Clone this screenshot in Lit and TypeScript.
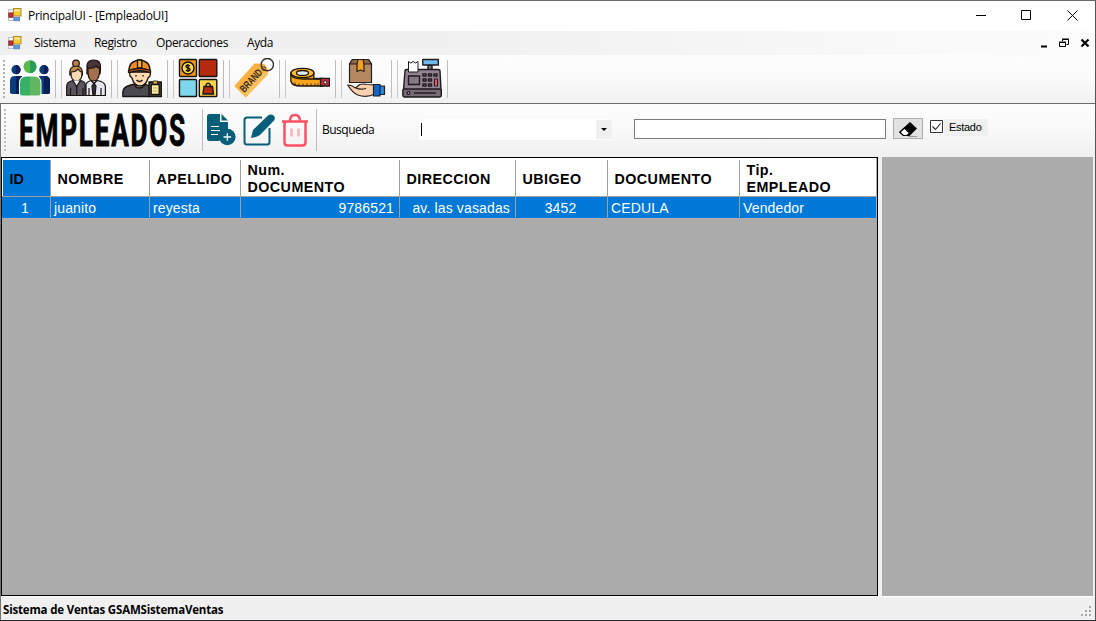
import { LitElement, html, css, svg } from "lit";
import { customElement } from "lit/decorators.js";

const people = svg`
  <g fill="#0a3a7c"><circle cx="6" cy="11.7" r="4.6"/><path d="M0 35V23q0-5 5-5h6v18H2z"/>
  <circle cx="33.9" cy="11.7" r="4.6"/><path d="M40 35V23q0-5-5-5h-6v18h9z"/></g>
  <g fill="#071f55"><path d="M6 7.1a4.6 4.6 0 0 1 0 9.200zM33.900 7.1a4.600 4.600 0 0 1 0 9.200zM6 18h6v18H6zM34 18h1q5 0 5 5v11q0 2-2 2h-4z"/></g>
  <path d="M9 37V25q0-7.500 7.500-7.500h7.500q7.500 0 7.500 7.500v12z" fill="#fdfdfd"/>
  <circle cx="20" cy="8.700" r="6.500" fill="#5cba4c"/><path d="M20 2.200a6.500 6.500 0 0 1 0 13z" fill="#299b5a"/>
  <path d="M10 35V25q0-6.500 6.500-6.500H20V37.500h-8q-2 0-2-2z" fill="#38b166"/><path d="M20 18.500h4q6.500 0 6.500 6.500v10q0 2.500-2 2.500H20z" fill="#60b75f"/>`;

const staff = svg`<g stroke="#17120f" stroke-width="1.200" stroke-linejoin="round">
  <circle cx="10" cy="5.500" r="3.300" fill="#b98145"/>
  <path d="M3.800 17Q3 8 10 8t6.500 9z" fill="#c08a4c"/><path d="M5 14q5 0 7-3 2 3 4 3 .5 9-5.500 9T5 14z" fill="#f8d9b5"/>
  <path d="M.7 37.500V28q0-4 6-5.500l4 4 4-4q4.500 1 4.500 4v11z" fill="#57545d"/><path d="M7 22.500l3.700 6 3.600-6" fill="#fff"/><path d="M10.700 28v9M4.500 30v7M17 30v7" fill="none"/>
  <path d="M21 16V7q1-5 7-5 7 0 6.500 8l-.5 6z" fill="#49343a"/><path d="M22 10q6 1 8-2 2 2 3.500 2v5q-1 8-6 8t-5.500-8z" fill="#a56f4e"/>
  <path d="M20 37.500V27q0-3 5-4.500l3 3 3-3q8 1 8.400 6v9z" fill="#e6e7ef"/><path d="M28 25l2 3-1 9.500h-2L26 28z" fill="#30303a"/><path d="M23 30v7M35 30v7" fill="none"/></g>`;

const worker = svg`<g stroke="#15110f" stroke-width="1.300" stroke-linejoin="round">
  <path d="M.8 38.500V34q0-5 8-7l4-1h10l5 2v10.500z" fill="#4b4a50"/><path d="M13 24v4q4 4 9 0v-4" fill="#f3c89f"/>
  <path d="M9 14q-2 0-1 4l2 2q2 8 8 8t8-8l2-2q1-4-1-4z" fill="#ffdab3"/>
  <path d="M7 13.500Q6.500 3 17.500 2 28.500 3 28 13.500q-10-3-21 0z" fill="#f18c21"/><path d="M15.500 2h4.300v8h-4.300z" fill="#ffaf3b"/><path d="M6.500 12.500q11-4 22 0v2q-11-3.500-22 0z" fill="#e9761a"/>
  <path d="M14 17v1.500M21 17v1.500M14.500 22q3 3 6 0" fill="none"/>
  <path d="M27 24h12.300v14.700H27z" fill="#4b4435"/><path d="M29.200 26.500h8v10h-8z" fill="#fff0a6"/><path d="M31 23h4.500v3H31z" fill="#d8b93b" stroke-width=".8"/></g><path d="M31 30h4.500M31 33h4.500" stroke="#c4a953"/>`;

const tiles = svg`<g stroke="#161313" stroke-width="1.400"><rect x="1.500" y="1.500" width="17" height="17" rx=".8" fill="#f3931c"/>
  <rect x="21.300" y="1.500" width="17.500" height="17" rx=".8" fill="#b52a0c"/><rect x="1.500" y="21.500" width="17" height="17" rx=".8" fill="#7fd7ef"/>
  <rect x="21.300" y="21.500" width="17.500" height="17" rx=".8" fill="#ffd34b"/><circle cx="10" cy="10" r="6" fill="#ffd64d"/>
  <path d="M12 7.800q-4-1.500-4 .7c0 2 4 1 4 3 0 2-2.500 1.700-4 .7M10 6v8" fill="none"/>
  <path d="M26 28.500h8.500l1 7.500H25z" fill="#b52a0c"/><path d="M28 29v-2q2-3.500 4.400 0v2" fill="none"/></g>`;

const brand = svg`<path d="M20.500 5.500l9.500.3 4 5.500-.5 5.500L11.700 39.500.3 28z" fill="#fbb03f"/><path d="M34 11.500l-.5 5.500-21.800 22.500L6 34z" fill="#ffc05d"/>
  <circle cx="33.300" cy="6.600" r="6.200" fill="none" stroke="#3a3637" stroke-width="1.500"/><circle cx="29.700" cy="10.500" r="1.800" fill="none" stroke="#3a3637"/>
  <text class="tag" transform="translate(10.300 35) rotate(-47)" textLength="27.500" lengthAdjust="spacingAndGlyphs">BRAND</text>`;

const tape = svg`<g stroke="#21170c" stroke-width="1.300" stroke-linejoin="round">
  <path d="M.8 15v8q1 5 10 5h22v-7.500h-9V15z" fill="#f6a51c"/><ellipse cx="12.500" cy="15" rx="11.500" ry="4.700" fill="#ffbd2e"/>
  <ellipse cx="12.500" cy="15" rx="6" ry="2.500" fill="#e2edf4"/><path d="M1 17q2 4 12 4h18" fill="none"/><path d="M5 27v-2.500M9 28v-2.500M13 28v-2.500M17 28v-2.500M21 28v-2.500M25 28v-2.500M28 28v-2.500" fill="none" stroke-width=".8"/>
  <path d="M30.500 20.300h9V28h-9z" fill="#b62f45"/><circle cx="35.200" cy="24.200" r="1.500" fill="#eee" stroke-width=".8"/></g>`;

const delivery = svg`<g stroke="#24201e" stroke-width="1.200" stroke-linejoin="round"><path d="M3.500 6l3-4.500h16l3 4.500v18.500h-22z" fill="#b68862"/>
  <path d="M3.500 6l3-4.500h16l3 4.500z" fill="#8f6849"/><path d="M12 1.500h5l1 5v7l-3.500-1.500-3.500 1.500v-7z" fill="#f5a01e"/>
  <path d="M1.700 27q4 0 8 3l4-3.500q4-1 7 0l8 .5v9q-8 4-17 1-5-2-10-10z" fill="#ffd0ad"/><path d="M10 30q4 2 10 .5" fill="none"/>
  <rect x="33" y="28" width="5.500" height="8.500" fill="#2488e6"/><rect x="27.500" y="26.500" width="6.500" height="11.500" fill="#1265cd"/></g>`;

const register = svg`<g stroke="#1e1a1e" stroke-width="1.400" stroke-linejoin="round"><path d="M26 7h4v6h-4z" fill="#777"/><rect x="20.800" y="1.500" width="15.500" height="5.500" fill="#70bbea"/>
  <path d="M3 13q0-1.500 2-1.500h31q2 0 2 1.500l1 19H1.500z" fill="#91838f"/><path d="M6.500 14V3.500l2.300 1.500 2.300-1.500L13.500 5l2.500-1.500V14z" fill="#fff" stroke-width="1"/>
  <rect x=".8" y="31" width="38.500" height="8" rx="2" fill="#776b77"/><rect x="6.500" y="18" width="11" height="8.500" fill="#877a86"/>
  <g fill="#c6b9c1"><path d="M21 16h3v2h-3zM26.500 16h3v2h-3zM32 16h3v2h-3zM21 21h3v2h-3zM26.500 21h3v2h-3zM21 26h3v2h-3zM26.500 26h3v2h-3z"/></g>
  <path d="M32.500 21h3v7h-3z" fill="#ff526a" stroke-width="1"/><circle cx="6.500" cy="35" r="1.400" fill="#ddd"/><path d="M12 35h22" /></g>`;

const tools: [string, unknown][] = [
  ["Clientes", people], ["Usuarios", staff], ["Empleados", worker], ["Categorias", tiles],
  ["Marcas", brand], ["Medidas", tape], ["Proveedores", delivery], ["Ventas", register],
];

const appIcon = html`<svg class="app-icon" width="14" height="14" viewBox="0 0 14 14">
  <path d="M.5 1.500h5v11h-5z" fill="#f3f5fa" stroke="#b7bdc9"/>
  <rect x="5.500" y=".5" width="7.500" height="7.500" fill="#f6cc3b" stroke="#b38a28"/><path d="M6.500 1.500h5.500v2H6.500z" fill="#ffeb96"/>
  <rect x=".9" y="5" width="3.800" height="4.200" fill="#cb3434" stroke="#8e2028"/><rect x="6" y="9.300" width="5.500" height="3.400" fill="#6499e1" stroke="#5c86c0"/></svg>`;

interface Column { title: string; cls: string; value: string; }
const columns: Column[] = [
  { title: "ID", cls: "center selected", value: "1" },
  { title: "NOMBRE", cls: "", value: "juanito" },
  { title: "APELLIDO", cls: "", value: "reyesta" },
  { title: "Num. DOCUMENTO", cls: "right", value: "9786521" },
  { title: "DIRECCION", cls: "right", value: "av. las vasadas" },
  { title: "UBIGEO", cls: "center", value: "3452" },
  { title: "DOCUMENTO", cls: "", value: "CEDULA" },
  { title: "Tip. EMPLEADO", cls: "", value: "Vendedor" },
];

@customElement("app-root")
export class AppRoot extends LitElement {
  static styles = css`
    :host { display: block; width: 1096px; height: 621px; overflow: hidden; color: #000; }
    * { box-sizing: border-box; }
    svg { display: block; flex: none; }
    .window { height: 621px; display: flex; flex-direction: column; background: #f0f0f0; border-top: 1px solid #6b686b; border-bottom: 1px solid #29272f; border-right: 1px solid #55535c; font: 12px "Open Sans", sans-serif; }
    .title { height: 30px; flex: none; display: flex; align-items: center; background: #fff; padding: 0 0 2px 8px; }
    .title-text { margin-left: 6px; letter-spacing: -.26px; flex: 1; white-space: nowrap; }
    .caption { display: flex; gap: 35px; margin-right: 17px; }
    .menu { height: 24px; flex: none; display: flex; align-items: center; padding: 0 0 1px 8px; background: linear-gradient(90deg, #f0f0f0 40%, #fcfcfc); }
    .menu-items { flex: 1; display: grid; grid-template-columns: 60px 62px 91px 60px; padding-left: 12px; letter-spacing: -.38px; }
    .mdi { margin-right: 5px; }
    .tools { height: 48px; flex: none; display: flex; background: linear-gradient(#fdfdfd, #fbfbfb 45%, #f1f1f1); border-radius: 3px; padding-top: 3px; }
    .tool { width: 56px; height: 42px; display: flex; align-items: flex-start; }
    .tool::before { content: ""; width: 1px; height: 38px; margin: 2px 4px 0 5px; background: #c5c5c5; }
    .tool::after { content: ""; width: 1px; height: 38px; margin: 2px 0 0 5px; background: #bdbdbd; }
    .tool:first-child::before { width: 2px; margin: 2px 5px 0 3px; background: repeating-linear-gradient(#b0b0b0 0 2px, transparent 2px 4px); }
    .tag { font: bold 10.500px "Liberation Sans", sans-serif; fill: #35302a; }
    .child { flex: 1; min-height: 0; display: flex; flex-direction: column; border-top: 1px solid #696969; border-left: 1px solid #737373; }
    .bar { height: 53px; flex: none; display: flex; align-items: flex-start; background: linear-gradient(#fdfdfd, #f8f8f8 50%, #f0f0f0); padding-top: 5px; }
    .grip { width: 2px; height: 42px; margin-left: 3px; background: repeating-linear-gradient(#bdbdbd 0 2px, transparent 2px 4px); }
    .heading { margin: -5px 0 0 12px; overflow: visible; }
    .heading-text { font: bold 44px Roboto, sans-serif; letter-spacing: 3px; stroke: #000; stroke-width: .9px; }
    .sep { width: 1px; height: 42px; background: #bdbdbd; }
    .doc { margin: 4px 7px 0 3px; }
    .edit { margin-top: 4px; }
    .trash { margin: 4px 7px 0 6px; }
    .label { margin: 12px 0 0 5px; width: 97px; letter-spacing: -.5px; line-height: 18px; }
    .combo { width: 193px; height: 21px; margin-top: 10px; background: #fff; display: flex; justify-content: space-between; align-items: center; padding: 0 0 0 2px; }
    .caret { width: 1px; height: 13px; background: #000; margin-bottom: 1px; }
    .drop { width: 16px; height: 19px; background: #f0f0f0; display: grid; place-items: center; }
    .field { width: 252px; height: 20px; margin: 10px 0 0 22px; background: #fff; border: 1px solid #7a7a7a; }
    .eraser { width: 30px; height: 21px; margin: 9px 0 0 7px; background: #e1e1e1; border: 1px solid #adadad; display: grid; place-items: center; }
    .check { height: 17px; margin: 10px 0 0 7px; width: 58px; display: flex; align-items: center; gap: 6px; background: linear-gradient(90deg, #f8f8f8 14px, #f0f0f0 14px); font: 11px "Liberation Sans", sans-serif; letter-spacing: -.3px; padding-bottom: 2px; }
    .content { height: 439px; flex: none; display: flex; }
    .grid { width: 877px; background: #ababab; border: 1px solid #000; flex: none; padding-right: 1px; }
    .row { display: grid; grid-template-columns: 49px 99px 91px 159px 116px 92px 132px 136px; }
    .head { height: 39px; background: #fff; border-bottom: 1px solid #a0a0a0; padding-top: 2px; }
    .th { border-right: 1px solid #a0a0a0; display: flex; align-items: center; padding: 2px 18px 0 6.500px; font: bold 14.300px/17px "Liberation Sans", sans-serif; letter-spacing: .45px; }
    .th:last-child, .td:last-child { border-right: 0; }
    .th.selected { background: #0078d7; margin-left: 1px; letter-spacing: 0; }
    .data { height: 22px; background: #0078d7; border-bottom: 1px solid #b0b0b0; color: #fff; }
    .td { border-right: 1px solid #a0a0a0; font: 14px/23px "Liberation Sans", sans-serif; letter-spacing: .14px; padding: 0 5px 0 3px; white-space: nowrap; }
    .center { text-align: center; }
    .td.center { padding-right: 5px; }
    .right { text-align: right; }
    .side { width: 211px; margin-left: 4px; background: #ababab; }
    .status { height: 24px; flex: none; display: flex; justify-content: space-between; align-items: center; border-top: 1px solid #fff; padding: 2px 3px 0 2px; font-weight: 700; font-size: 11.500px; letter-spacing: -.18px; }
    .size-grip { margin-top: 3px; }
  `;

  render() {
    return html`<div class="window">
      <div class="title">${appIcon}<span class="title-text">PrincipalUI - [EmpleadoUI]</span>
        <div class="caption">
          <svg width="11" height="11"><path d="M1 5.500h10" stroke="#000"/></svg>
          <svg width="11" height="11"><path d="M.5.5h9v9h-9z" fill="none" stroke="#000"/></svg>
          <svg width="11" height="11"><path d="M.5.500l10 10M10.500.500l-10 10" stroke="#000"/></svg>
        </div>
      </div>
      <div class="menu">${appIcon}
        <div class="menu-items"><span>Sistema</span><span>Registro</span><span>Operacciones</span><span>Ayda</span></div>
        <svg class="mdi" width="50" height="10" fill="none" stroke="#000">
          <path d="M1 8.500h6" stroke-width="2"/><path d="M22.500 3V1.500h6v5h-2M19.500 4.500h6v4h-6zM22 1h7M19 4h7"/><path d="M41.500 1.500l7 7M48.500 1.500l-7 7" stroke-width="2.200"/>
        </svg>
      </div>
      <div class="tools">${tools.map(([name, art]) => html`<div class="tool"><svg role="img" aria-label=${name} width="40" height="40" viewBox="0 0 40 40">${art}</svg></div>`)}</div>
      <div class="child">
        <div class="bar">
          <div class="grip"></div>
          <svg class="heading" width="184" height="53"><text class="heading-text" x="1" y="42" textLength="168" lengthAdjust="spacingAndGlyphs">EMPLEADOS</text></svg>
          <div class="sep"></div>
          <svg class="doc" width="30" height="34" fill="#075e78">
            <path d="M3.500 1H14v8h8v9q-8 1-8.500 10H3.500Q1 28 1 25.500v-22Q1 1 3.500 1zM15.500 1L22 7.500h-6.500z"/>
            <path d="M5 13.500h8M5 17.500h9M5 21.500h7" stroke="#fff" stroke-width="1.200"/><circle cx="21.300" cy="24" r="8.300"/><path d="M17.500 24h7.600M21.300 20.200v7.600" stroke="#fff" stroke-width="1.300"/>
          </svg>
          <svg class="edit" width="32" height="34"><path d="M19 4.500H4q-2.500 0-2.500 2.500v22Q1.500 31.500 4 31.500h20q2.500 0 2.500-2.500V15" fill="none" stroke="#075e78" stroke-width="2"/>
            <path d="M8 25l2-8L25 2.500Q28 .5 30.500 2.500t.5 5L17 22q-3 2-9 3z" fill="#075e78"/></svg>
          <svg class="trash" width="28" height="34" fill="none" stroke="#fb5165"><path d="M1 8.500h26M3.500 9v20.500q0 3 3 3h15q3 0 3-3V9" stroke-width="2.500"/><path d="M9 8q0-6 5-6t5 6" stroke-width="2.300"/><path d="M10.500 15.500v8M17.500 15.500v8" stroke="#ffb3bd" stroke-width="2.600"/></svg>
          <div class="sep"></div>
          <span class="label">Busqueda</span>
          <div class="combo"><i class="caret"></i><span class="drop"><svg width="6" height="3"><path d="M0 0h6L3 3z"/></svg></span></div>
          <div class="field"></div>
          <div class="eraser"><svg width="20" height="16"><path d="M12 1l7 6.500-7.500 7.500H5L1 11z"/><path d="M6.500 7l5 5-2.500 2.500H5.500L2 11.200z" fill="#fff" stroke="#000" stroke-width="1.200"/><path d="M10 15.500h9" stroke="#999"/></svg></div>
          <label class="check"><svg width="13" height="13"><path d="M.5.5h12v12H.5z" fill="#fff" stroke="#333"/><path d="M2.500 6.500l3 3 5-6" fill="none" stroke="#222" stroke-width="1.100"/></svg>Estado</label>
        </div>
        <div class="content">
          <div class="grid">
            <div class="row head">${columns.map((c) => html`<div class="th ${c.cls.includes("selected") ? "selected" : ""}">${c.title}</div>`)}</div>
            <div class="row data">${columns.map((c) => html`<div class="td ${c.cls}">${c.value}</div>`)}</div>
          </div>
          <div class="side"></div>
        </div>
        <div class="status"><span>Sistema de Ventas GSAMSistemaVentas</span>
          <svg class="size-grip" width="11" height="11" fill="#a8a8a8"><path d="M8 0h2v2H8zM4 4h2v2H4zM8 4h2v2H8zM0 8h2v2H0zM4 8h2v2H4zM8 8h2v2H8z"/></svg>
        </div>
      </div>
    </div>`;
  }
}
